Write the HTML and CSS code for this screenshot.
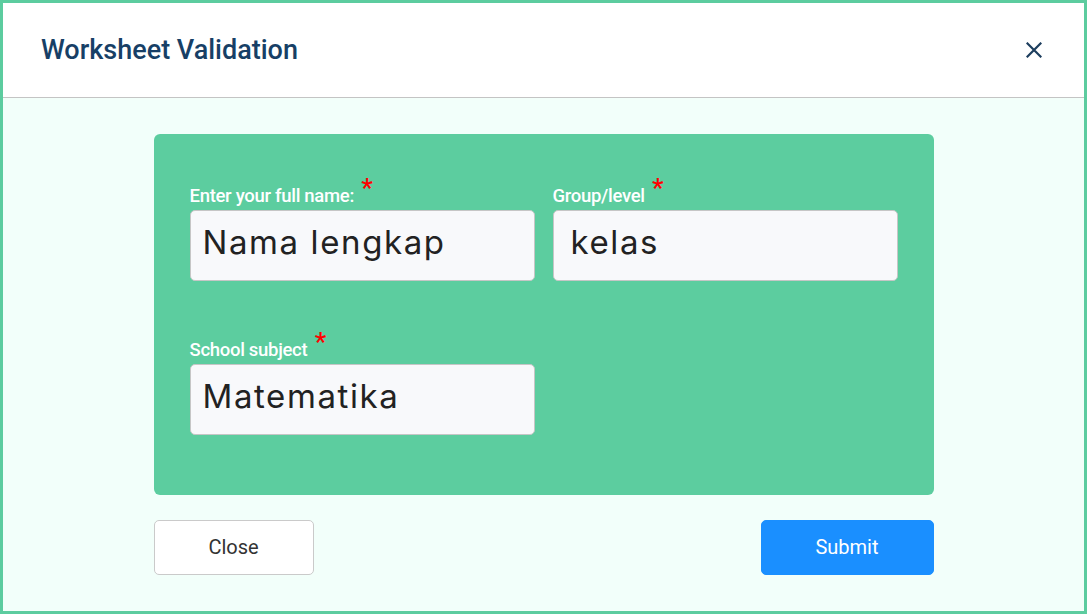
FILE: index.html
```html
<!DOCTYPE html>
<html>
<head>
<meta charset="utf-8">
<link rel="stylesheet" href="styles.css">
</head>
<body>
<div class="modal">
  <header class="modal-header">
    <h1 class="title">Worksheet Validation</h1>
    <button class="x-btn" aria-label="Close">
      <svg width="16" height="16" viewBox="0 0 16 16"><path d="M1.5 1.5 L14.5 14.5 M14.5 1.5 L1.5 14.5" stroke="#1d3e5e" stroke-width="2.2" stroke-linecap="square" fill="none"/></svg>
    </button>
  </header>
  <main class="modal-body">
    <section class="card">
      <div class="grid">
        <div class="field">
          <label class="label">Enter your full name: <span class="req">*</span></label>
          <div class="input">Nama lengkap</div>
        </div>
        <div class="field">
          <label class="label">Group/level <span class="req">*</span></label>
          <div class="input input-indent">kelas</div>
        </div>
        <div class="field">
          <label class="label">School subject <span class="req">*</span></label>
          <div class="input">Matematika</div>
        </div>
      </div>
    </section>
    <div class="actions">
      <button class="btn btn-close">Close</button>
      <button class="btn btn-submit">Submit</button>
    </div>
  </main>
</div>
</body>
</html>
```

FILE: styles.css
```css
* { box-sizing: border-box; }
html, body { margin: 0; padding: 0; }
body {
  width: 1087px;
  height: 614px;
  font-family: Roboto, "Liberation Sans", sans-serif;
  background: #5ccc9f;
}
.modal {
  width: 1087px;
  height: 614px;
  border: 3px solid #5ccc9f;
  display: flex;
  flex-direction: column;
  background: #f2fffa;
}
.modal-header {
  height: 95px;
  background: #ffffff;
  border-bottom: 1px solid #c4c4c4;
  display: flex;
  align-items: center;
  justify-content: space-between;
  padding: 0 42px 0 38px;
}
.title {
  margin: 0;
  font-size: 27px;
  font-weight: 500;
  color: #173f66;
  letter-spacing: 0;
}
.x-btn {
  background: none;
  border: none;
  padding: 0;
  width: 16px;
  height: 16px;
  display: flex;
}
.modal-body {
  flex: 1;
  padding: 36px 0 0 0;
  display: flex;
  flex-direction: column;
  align-items: center;
}
.card {
  width: 780px;
  height: 361px;
  background: #5ccd9f;
  border-radius: 6px;
  padding: 46px 36px 0 36px;
}
.grid {
  display: grid;
  grid-template-columns: 345px 345px;
  column-gap: 18px;
  row-gap: 53px;
}
.field {
  display: flex;
  flex-direction: column;
}
.label {
  font-size: 18.5px;
  font-weight: 500;
  color: #ffffff;
  height: 30px;
  line-height: 26px;
  letter-spacing: -0.3px;
  white-space: nowrap;
}
.req {
  color: #ff0000;
  font-size: 26px;
  position: relative;
  top: -5px;
  margin-left: 3px;
}
.input {
  height: 71px;
  background: #f8f9fb;
  border: 1px solid #c6c6c6;
  border-radius: 5px;
  padding: 0 12px 8px 12px;
  display: flex;
  align-items: center;
  font-family: Inter, Lato, sans-serif;
  font-size: 33px;
  color: #222222;
  letter-spacing: 1.6px;
}
.input-indent { padding-left: 17px; }
.actions {
  width: 780px;
  margin-top: 25px;
  display: flex;
  justify-content: space-between;
}
.btn {
  font-family: Roboto, "Liberation Sans", sans-serif;
  font-size: 20px;
  height: 55px;
  border-radius: 5px;
  cursor: pointer;
  padding-bottom: 2px;
}
.btn-close {
  width: 160px;
  background: #ffffff;
  border: 1px solid #cacaca;
  color: #333333;
}
.btn-submit {
  width: 173px;
  background: #1a8fff;
  border: 1px solid #1a8fff;
  color: #ffffff;
}
```
